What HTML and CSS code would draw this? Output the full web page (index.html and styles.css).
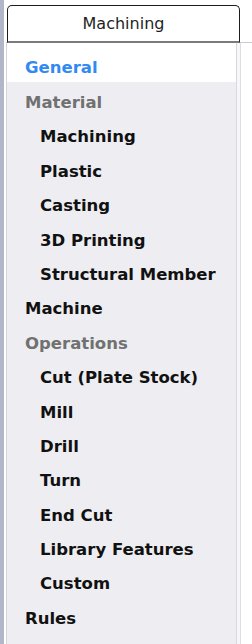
FILE: index.html
```html
<!DOCTYPE html>
<html lang="en">
<head>
    <meta charset="UTF-8">
    <title>Machining Options</title>
    <link rel="stylesheet" href="styles.css">
</head>
<body>

<div class="window">
    <div class="edge"></div>

    <div class="main">
        <div class="tab-row">
            <div class="tab">Machining</div>
        </div>

        <div class="panel-wrap">
            <ul class="tree">
                <li class="item selected">General</li>
                <li class="item group">Material</li>
                <li class="item sub">Machining</li>
                <li class="item sub">Plastic</li>
                <li class="item sub">Casting</li>
                <li class="item sub">3D Printing</li>
                <li class="item sub">Structural Member</li>
                <li class="item">Machine</li>
                <li class="item group">Operations</li>
                <li class="item sub">Cut (Plate Stock)</li>
                <li class="item sub">Mill</li>
                <li class="item sub">Drill</li>
                <li class="item sub">Turn</li>
                <li class="item sub">End Cut</li>
                <li class="item sub">Library Features</li>
                <li class="item sub">Custom</li>
                <li class="item">Rules</li>
            </ul>
            <div class="scroll-gap"></div>
        </div>
    </div>
</div>

</body>
</html>
```

FILE: styles.css
```css
body {
    margin: 0;
    padding: 0;
    background-color: #ffffff;
    font-family: "DejaVu Sans", Verdana, sans-serif;
    overflow: hidden;
}

.window {
    display: flex;
    width: 252px;
    height: 644px;
}

/* Blue-grey strip on the far left */
.edge {
    width: 4px;
    background-color: #b1b6c9;
    flex-shrink: 0;
}

.main {
    flex: 1;
    display: flex;
    flex-direction: column;
    padding-left: 2px;
}

.tab-row {
    height: 43px;
    padding-top: 5px;
    box-sizing: border-box;
    border-bottom: 1px solid #c6cadb;
    display: flex;
}

.tab {
    margin-left: 1px;
    width: 233px;
    height: 38px;
    box-sizing: border-box;
    border: 1px solid #1c1c1c;
    border-bottom: 2px solid #7a7a7a;
    border-radius: 5px 5px 0 0;
    background-color: #ffffff;
    text-align: center;
    font-size: 16px;
    line-height: 35px;
    color: #1e1e1e;
}

.panel-wrap {
    flex: 1;
    display: flex;
}

.tree {
    list-style: none;
    margin: 0;
    padding: 0;
    width: 231px;
    box-sizing: border-box;
    background-color: #eeeef2;
    border-left: 1px solid #d3d4dc;
    border-right: 1px solid #d8d8de;
}

.scroll-gap {
    width: 3px;
    background-color: #f7f7f9;
    border-right: 1px solid #dedee2;
}

.item {
    height: 34.4px;
    line-height: 34.4px;
    padding-left: 18px;
    font-size: 16.5px;
    font-weight: bold;
    color: #111111;
    white-space: nowrap;
}

.item.sub {
    padding-left: 33px;
}

.item.group {
    color: #717171;
}

.item.selected {
    background-color: #ffffff;
    color: #3189f2;
    height: 31px;
    padding-top: 8px;
    margin-bottom: 4px;
    line-height: 34px;
}
```
